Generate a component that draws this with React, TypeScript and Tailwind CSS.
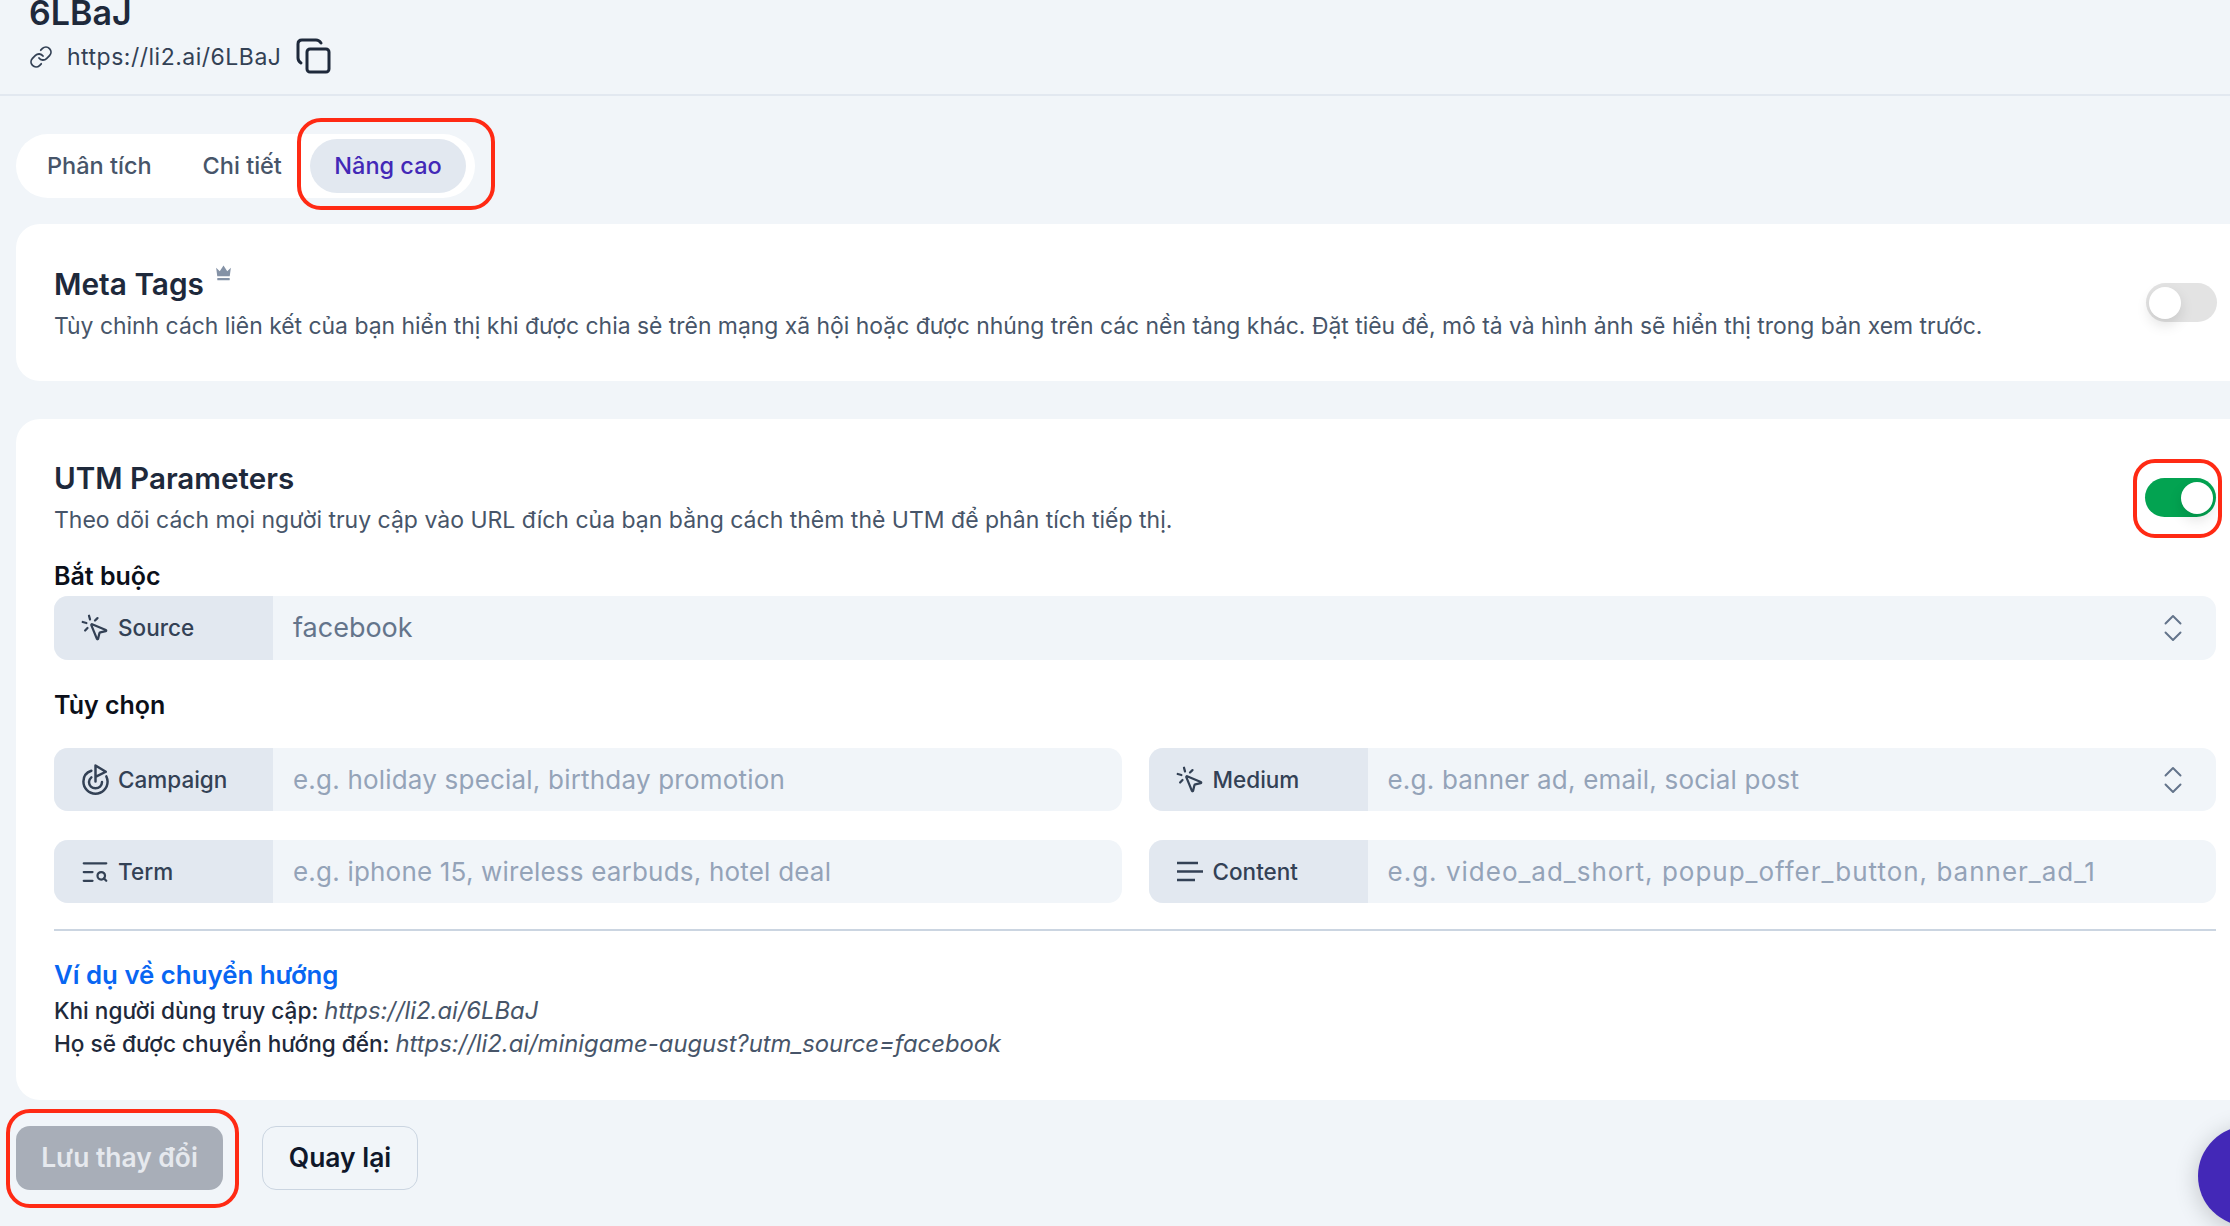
import { ChevronsUpDown, Link, MousePointerClick, TextSearch } from "lucide-react";
import type { ReactNode } from "react";

const FONT = "font-['Inter','Noto_Sans',sans-serif]";

function CopyIcon() {
  return (
    <svg width="36" height="36" viewBox="0 0 36 36" fill="none" stroke="#1e293b" strokeWidth="3">
      <rect x="11" y="11" width="22" height="23" rx="3" />
      <path d="M5 25 C3.500 24 2 23 2 20 V6 C2 3.500 3.500 2 6 2 H20 C23 2 24 3.500 25 5" strokeLinecap="round" />
    </svg>
  );
}

function CrownIcon() {
  return (
    <svg width="17" height="17" viewBox="0 0 15 15" fill="#8492a6">
      <path d="M1 2.500 L4.200 5.500 L7.500 0.500 L10.800 5.500 L14 2.500 L13 10 H2 Z" />
      <rect x="2" y="11.500" width="11" height="2" rx="0.500" />
    </svg>
  );
}

function CampaignIcon() {
  return (
    <svg width="27" height="31" viewBox="0 0 26 30" fill="none" stroke="#334155" strokeWidth="2.400" strokeLinecap="round" strokeLinejoin="round">
      <path d="M9 6.500 C4.500 8 1.300 12 1.300 17 C1.300 23.500 6.500 28.700 13 28.700 C19.500 28.700 24.700 23.500 24.700 17 C24.700 15 24.200 13.500 23.500 12" />
      <path d="M9 13 C7.500 14.300 6.700 15.800 6.700 17.500 C6.700 21 9.500 23.500 13 23.500 C16.500 23.500 19.300 21 19.300 17.500" />
      <path d="M13 17 V1.500 L23 7.500 L13 12.500" />
    </svg>
  );
}

function ContentIcon() {
  return (
    <svg width="28" height="22" viewBox="0 0 28 22" fill="none" stroke="#334155" strokeWidth="2.600">
      <path d="M1 2 H22" />
      <path d="M1 10.500 H27" />
      <path d="M1 19 H19" />
    </svg>
  );
}

function Toggle({ on }: { on?: boolean }) {
  return (
    <div
      className={`flex h-[39px] w-[71px] shrink-0 items-center rounded-full p-[3px] ${
        on ? "justify-end bg-[#03a351]" : "justify-start bg-[#e3e3e3]"
      }`}
    >
      <div className="h-[32px] w-[32px] rounded-full bg-white shadow-[0_6px_14px_rgba(0,0,0,0.12)]" />
    </div>
  );
}

function Field({
  icon,
  label,
  placeholder,
  value,
  select,
  className,
}: {
  icon: ReactNode;
  label: string;
  placeholder?: ReactNode;
  value?: string;
  select?: boolean;
  className?: string;
}) {
  return (
    <div className={`flex h-[63px] overflow-hidden rounded-[14px] bg-[#f1f5f9] ${className ?? ""}`}>
      <div className="flex w-[219px] shrink-0 items-center gap-[8px] bg-[#e2e8f0] pl-[26px] text-[22.5px] font-medium text-[#334155]">
        <span className="flex w-[30px] shrink-0 justify-center">{icon}</span>
        {label}
      </div>
      <div className="flex flex-1 items-center justify-between pl-[20px] pr-[25px] text-[26px] tracking-[0.2px]">
        {value ? (
          <span className="text-[27px] tracking-normal text-[#64748b]">{value}</span>
        ) : (
          <span className="text-[#94a3b8]">{placeholder}</span>
        )}
        {select && <ChevronsUpDown size={36} strokeWidth={1.300} className="text-[#64748b]" />}
      </div>
    </div>
  );
}

export default function App() {
  return (
    <div className={`relative h-[1226px] w-[2230px] overflow-hidden bg-[#f1f5f9] ${FONT}`}>
      {/* Header */}
      <div className="flex h-[96px] flex-col border-b-2 border-[#e2e8f0] pl-[29px]">
        <h1 className="-mt-[7px] text-[34px] font-semibold leading-[40px] text-[#1e293b]">6LBaJ</h1>
        <div className="mt-[7px] flex items-center text-[23px] tracking-[0.5px] text-[#334155]">
          <Link size={24} strokeWidth={1.800} />
          <span className="ml-[14px]">https://li2.ai/6LBaJ</span>
          <span className="-mt-[2px] ml-[15px]">
            <CopyIcon />
          </span>
        </div>
      </div>

      {/* Tabs */}
      <div className="ml-[16px] mt-[38px] flex h-[64px] w-[459px] items-center rounded-full bg-white pl-[31px] pr-[9px] text-[23.5px] font-medium text-[#475569]">
        <span>Phân tích</span>
        <span className="ml-[51px]">Chi tiết</span>
        <span className="ml-auto flex h-[54px] w-[156px] items-center justify-center rounded-full bg-[#e2e8f0] text-[#4328b7]">
          Nâng cao
        </span>
      </div>

      {/* Meta tags */}
      <section className="ml-[16px] mt-[26px] flex h-[157px] items-start justify-between rounded-l-[24px] bg-white pl-[38px] pr-[13px] pt-[42px]">
        <div>
          <div className="flex items-start">
            <h2 className="text-[29.800px] font-semibold leading-[36px] text-[#1e293b]">Meta Tags</h2>
            <span className="ml-[11px] -mt-[1px]">
              <CrownIcon />
            </span>
          </div>
          <p className="mt-[8px] text-[22.9px] leading-[32px] text-[#475569]">
            Tùy chỉnh cách liên kết của bạn hiển thị khi được chia sẻ trên mạng xã hội hoặc được nhúng trên các nền tảng khác. Đặt tiêu đề, mô tả và hình ảnh sẽ hiển thị trong bản xem trước.
          </p>
        </div>
        <div className="mt-[17px]">
          <Toggle />
        </div>
      </section>

      {/* UTM */}
      <section className="ml-[16px] mt-[38px] h-[681px] rounded-l-[24px] bg-white pl-[38px] pr-[14px] pt-[41px]">
        <div className="flex items-start justify-between">
          <div>
            <h2 className="text-[29.600px] font-semibold leading-[36px] text-[#1e293b]">UTM Parameters</h2>
            <p className="mt-[8px] text-[23px] leading-[32px] text-[#475569]">
              Theo dõi cách mọi người truy cập vào URL đích của bạn bằng cách thêm thẻ UTM để phân tích tiếp thị.
            </p>
          </div>
          <div className="mt-[18px]">
            <Toggle on />
          </div>
        </div>

        <h3 className="mt-[24px] text-[25px] font-semibold leading-[32px] text-[#0b0f19]">Bắt buộc</h3>
        <Field
          className="mt-[4px] h-[64px]"
          icon={<MousePointerClick size={30} strokeWidth={1.800} />}
          label="Source"
          value="facebook"
          select
        />
        <h3 className="mt-[29px] text-[25px] font-semibold leading-[32px] text-[#0b0f19]">Tùy chọn</h3>

        <div className="mt-[27px] grid grid-cols-2 gap-x-[27px] gap-y-[29px]">
          <Field icon={<CampaignIcon />} label="Campaign" placeholder="e.g. holiday special, birthday promotion" />
          <Field
            icon={<MousePointerClick size={30} strokeWidth={1.800} />}
            label="Medium"
            placeholder="e.g. banner ad, email, social post"
            select
          />
          <Field icon={<TextSearch size={30} strokeWidth={1.800} />} label="Term" placeholder="e.g. iphone 15, wireless earbuds, hotel deal" />
          <Field
            icon={<ContentIcon />}
            label="Content"
            placeholder={<span className="tracking-[1px]">e.g. video_ad_short, popup_offer_button, banner_ad_1</span>}
          />
        </div>

        <div className="mt-[26px] border-t-2 border-[#cbd5e1]" />

        <h4 className="mt-[27px] text-[25.800px] font-semibold leading-[34px] text-[#0866f2]">Ví dụ về chuyển hướng</h4>
        <p className="mt-[2px] text-[22.600px] font-medium leading-[33px] text-[#1e293b]">
          Khi người dùng truy cập: <em className="text-[23.800px] font-normal text-[#475569]">https://li2.ai/6LBaJ</em>
        </p>
        <p className="text-[22.600px] font-medium leading-[33px] text-[#1e293b]">
          Họ sẽ được chuyển hướng đến:{" "}
          <em className="text-[23.800px] font-normal text-[#475569]">https://li2.ai/minigame-august?utm_source=facebook</em>
        </p>
      </section>

      {/* Actions */}
      <div className="ml-[16px] mt-[26px] flex gap-[39px]">
        <button className="h-[64px] w-[207px] rounded-[14px] bg-[#a8aeb8] text-[26.400px] font-semibold text-[#e6e9ee]">
          Lưu thay đổi
        </button>
        <button className="h-[64px] w-[156px] rounded-[14px] border border-[#cbd5e1] text-[26.400px] font-semibold text-[#0f172a]">
          Quay lại
        </button>
      </div>

      {/* Chat bubble */}
      <div className="absolute left-[2198px] top-[1126px] h-[100px] w-[100px] rounded-full bg-[#4328b7] shadow-[0_4px_24px_rgba(0,0,0,0.2)]" />

      {/* Annotations */}
      <div className="absolute left-[297px] top-[118px] h-[92px] w-[198px] rounded-[24px] border-[4px] border-[#ff2a14]" />
      <div className="absolute left-[2133px] top-[459px] h-[79px] w-[89px] rounded-[22px] border-[4px] border-[#ff2a14]" />
      <div className="absolute left-[6px] top-[1109px] h-[99px] w-[233px] rounded-[24px] border-[4px] border-[#ff2a14]" />
    </div>
  );
}
